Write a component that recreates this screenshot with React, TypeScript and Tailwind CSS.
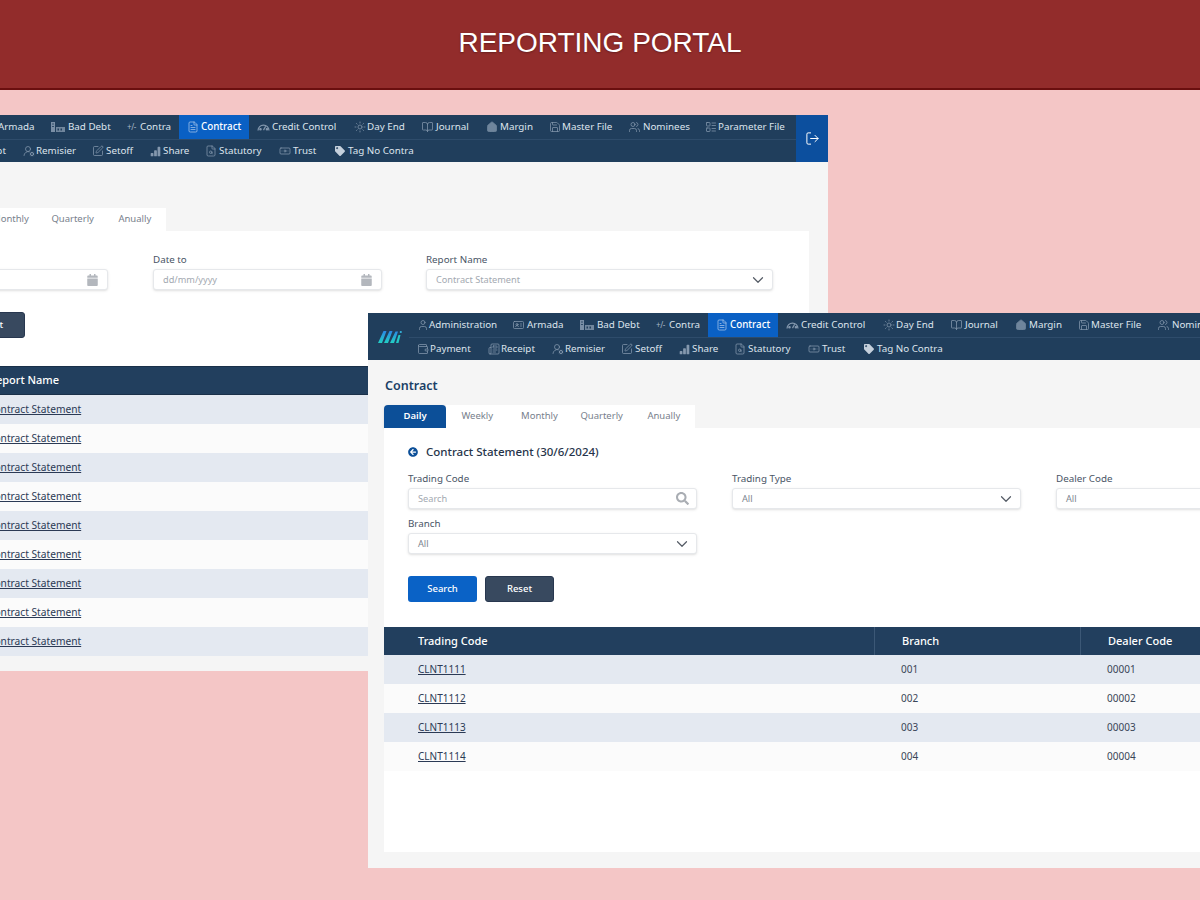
import { ReactNode } from "react";
import {
  BookOpen,
  ChevronDown,
  FileSearch,
  FileText,
  House,
  IdCard,
  LogOut,
  Newspaper,
  Save,
  SquarePen,
  Sun,
  User,
  UserRoundCog,
  Users,
  Banknote,
  Wallet,
  LayoutList,
} from "lucide-react";
import { BsBarChartFill } from "react-icons/bs";
import { FaArrowCircleLeft, FaCalendar, FaSearch, FaTag } from "react-icons/fa";

const ic = "w-3 h-3 text-[#8498ae]";
const font = { fontFamily: '"Noto Sans", sans-serif' };

function BadDebtIcon() {
  return (
    <svg viewBox="0 0 16 12" className="w-4 h-3 text-[#8498ae]" fill="currentColor">
      <path d="M1 1 h4 v10 h-4 Z" opacity="0.9" />
      <path d="M6 6 h9 v5 h-9 Z" opacity="0.8" />
      <path d="M7.5 7.5 h1.5 v2 h-1.5 Z M10.5 7.5 h1.5 v2 h-1.5 Z" fill="#203e5c" />
      <path d="M2.2 2.5 h1.6 v1 h-1.6 Z M2.2 5 h1.6 v1 h-1.6 Z" fill="#203e5c" />
    </svg>
  );
}

function GaugeIcon() {
  return (
    <svg viewBox="0 0 15 12" className="w-[13px] h-[11px] text-[#8498ae]" fill="none" stroke="currentColor" strokeWidth="1.4">
      <path d="M1.2 9.5 A6.3 6.3 0 0 1 13.8 9.5" />
      <path d="M7.5 9 L10 4.5" />
      <circle cx="4" cy="8" r="0.8" fill="currentColor" />
      <circle cx="11.5" cy="8" r="0.8" fill="currentColor" />
    </svg>
  );
}

type Item = { label: string; icon: ReactNode; w: string; slot: string; active?: boolean };

const row1: Item[] = [
  { label: "Administration", icon: <User className={ic} strokeWidth={1.5} />, w: "w-[95px]", slot: "w-[12px]" },
  { label: "Armada", icon: <IdCard className="w-[13px] h-3 text-[#8498ae]" strokeWidth={1.5} />, w: "w-[67px]", slot: "w-[15px]" },
  { label: "Bad Debt", icon: <BadDebtIcon />, w: "w-[77px]", slot: "w-[18px]" },
  { label: "Contra", icon: <span className="text-[8px] leading-none tracking-tighter text-[#a7b6c6]">+/-</span>, w: "w-[60px]", slot: "w-[13px]" },
  { label: "Contract", icon: <FileText className="w-3 h-3 text-[#a9c6ea]" strokeWidth={1.5} />, w: "w-[70px]", slot: "w-[14px]", active: true },
  { label: "Credit Control", icon: <GaugeIcon />, w: "w-[97px]", slot: "w-[15px]" },
  { label: "Day End", icon: <Sun className={ic} strokeWidth={1.5} />, w: "w-[67px]", slot: "w-[13px]" },
  { label: "Journal", icon: <BookOpen className="w-[13px] h-3 text-[#8498ae]" strokeWidth={1.5} />, w: "w-[65px]", slot: "w-[15px]" },
  { label: "Margin", icon: <House className="w-3 h-3 text-[#6f859c] fill-[#6f859c]" strokeWidth={1.5} />, w: "w-[63px]", slot: "w-[14px]" },
  { label: "Master File", icon: <Save className={ic} strokeWidth={1.5} />, w: "w-[79px]", slot: "w-[13px]" },
  { label: "Nominees", icon: <Users className="w-[13px] h-3 text-[#8498ae]" strokeWidth={1.5} />, w: "w-[77px]", slot: "w-[15px]" },
  { label: "Parameter File", icon: <LayoutList className={ic} strokeWidth={1.5} />, w: "w-[99px]", slot: "w-[13px]" },
];

const row2: Item[] = [
  { label: "Payment", icon: <Wallet className={ic} strokeWidth={1.5} />, w: "w-[71px]", slot: "w-[13px]" },
  { label: "Receipt", icon: <Newspaper className={ic} strokeWidth={1.5} />, w: "w-[64px]", slot: "w-[13px]" },
  { label: "Remisier", icon: <UserRoundCog className={ic} strokeWidth={1.5} />, w: "w-[69px]", slot: "w-[13px]" },
  { label: "Setoff", icon: <SquarePen className={ic} strokeWidth={1.5} />, w: "w-[58px]", slot: "w-[14px]" },
  { label: "Share", icon: <BsBarChartFill className="w-[11px] h-[11px] text-[#8498ae]" />, w: "w-[55px]", slot: "w-[13px]" },
  { label: "Statutory", icon: <FileSearch className={ic} strokeWidth={1.5} />, w: "w-[73px]", slot: "w-[14px]" },
  { label: "Trust", icon: <Banknote className="w-[14px] h-3 text-[#8498ae]" strokeWidth={1.5} />, w: "w-[57px]", slot: "w-[15px]" },
  { label: "Tag No Contra", icon: <FaTag className="w-[10px] h-[10px] text-[#c5d0dc]" />, w: "w-[90px]", slot: "w-[13px]" },
];

function NavItem({ item }: { item: Item }) {
  return (
    <div
      className={`${item.w} shrink-0 h-full flex items-center pl-2 whitespace-nowrap text-[9.8px] ${
        item.active ? "bg-[#0a60c4] text-white font-medium" : "text-[#dde4ec]"
      }`}
    >
      <span className={`${item.slot} shrink-0 flex items-center`}>{item.icon}</span>
      <span>{item.label}</span>
    </div>
  );
}

function NavBar() {
  return (
    <div className="h-[47px] shrink-0 flex bg-[#203e5c]">
      <div className="w-[41px] shrink-0 flex items-center justify-center">
        <svg width="24" height="13" viewBox="0 0 24 13" className="ml-[2px]">
          <defs>
            <linearGradient id="mi" x1="0" y1="1" x2="0" y2="0">
              <stop offset="0" stopColor="#22d0c4" />
              <stop offset="1" stopColor="#2a86e6" />
            </linearGradient>
          </defs>
          <path d="M0 13 L5.5 1 L8.5 1 L4 13 Z M6 13 L11.5 1 L14.5 1 L10 13 Z M12 13 L17.5 1.5 L20 1.5 L16 13 Z" fill="url(#mi)" />
          <path d="M18 13 L20.5 5 L22.5 5 L20.5 13 Z" fill="#22c8c8" />
          <circle cx="22.8" cy="2" r="1.1" fill="#35b8e0" />
        </svg>
      </div>
      <div className="flex-1 min-w-0 flex flex-col">
        <div className="h-[25px] flex border-b border-[#2e4c6b]">
          {row1.map((i) => (
            <NavItem key={i.label} item={i} />
          ))}
        </div>
        <div className="h-[22px] flex">
          {row2.map((i) => (
            <NavItem key={i.label} item={i} />
          ))}
        </div>
      </div>
      <div className="w-[32px] shrink-0 bg-[#0c4f9e] flex items-center justify-center">
        <LogOut className="w-[15px] h-[15px] text-white" strokeWidth={1.6} />
      </div>
    </div>
  );
}

function Tabs() {
  return (
    <div className="flex h-[23px]">
      {["Daily", "Weekly", "Monthly", "Quarterly", "Anually"].map((t, i) => (
        <div
          key={t}
          className={`w-[62.2px] flex items-center justify-center text-[9.5px] ${
            i === 0
              ? "bg-[#0c4f98] text-white font-semibold rounded-t-sm shadow"
              : "bg-white text-[#77808c]"
          }`}
        >
          {t}
        </div>
      ))}
    </div>
  );
}

function Field({ label, value, w, right, placeholder }: { label: string; value: string; w: string; right: ReactNode; placeholder?: boolean }) {
  return (
    <div className={`${w} shrink-0`}>
      <div className="h-[16px] flex items-center text-[9.8px] text-[#4a5566]">{label}</div>
      <div className="mt-[1px] h-[21px] pl-[9px] pr-[5px] flex items-center justify-between rounded-[3px] border border-[#e6e8eb] bg-white shadow-sm">
        <span className={`text-[9.2px] ${placeholder ? "text-[#a3a9b1]" : "text-[#7d8590]"}`}>{value}</span>
        {right}
      </div>
    </div>
  );
}

const chevron = <ChevronDown className="w-[18px] h-[18px] text-[#555c66]" strokeWidth={1.6} />;
const calendar = <FaCalendar className="w-[11px] h-[12px] mr-[4px] text-[#b3b7bd]" />;

function Buttons() {
  return (
    <div className="flex gap-2">
      <div className="w-[69px] h-[26px] rounded-[3px] bg-[#0a62c6] text-white text-[9.5px] font-medium flex items-center justify-center">
        Search
      </div>
      <div className="w-[69px] h-[26px] rounded-[3px] bg-[#38495f] border border-[#28374f] text-white text-[9.5px] font-medium flex items-center justify-center">
        Reset
      </div>
    </div>
  );
}

function BackWindow() {
  return (
    <div className="absolute left-[-161px] top-[115px] w-[989px] h-[556px] flex flex-col bg-[#f5f5f5]">
      <NavBar />
      <div className="flex-1 flex flex-col pl-4 pr-[19px] pb-[15px] pt-[46px]">
        <Tabs />
        <div className="flex-1 bg-white flex flex-col">
          <div className="pl-6 pt-[21px] flex gap-[45px]">
            <Field label="Date from" value="dd/mm/yyyy" w="w-[229px]" right={calendar} placeholder />
            <div className="mr-[-1px]">
              <Field label="Date to" value="dd/mm/yyyy" w="w-[229px]" right={calendar} placeholder />
            </div>
            <Field label="Report Name" value="Contract Statement" w="w-[347px]" right={chevron} placeholder />
          </div>
          <div className="pl-6 pt-[22px]">
            <Buttons />
          </div>
          <div className="mt-[28px] h-[29px] bg-[#223f5e] border border-[#1a3049] pl-[133px] flex items-center text-[11px] font-medium text-white">
            Report Name
          </div>
          {Array.from({ length: 9 }).map((_, i) => (
            <div
              key={i}
              className={`h-[29px] pl-[133px] flex items-center text-[10.2px] text-[#2b3a55] underline ${
                i % 2 === 0 ? "bg-[#e4e9f1]" : "bg-[#fbfbfb]"
              }`}
            >
              Contract Statement
            </div>
          ))}
        </div>
      </div>
    </div>
  );
}

const clients = [
  { code: "CLNT1111", branch: "001", dealer: "00001" },
  { code: "CLNT1112", branch: "002", dealer: "00002" },
  { code: "CLNT1113", branch: "003", dealer: "00003" },
  { code: "CLNT1114", branch: "004", dealer: "00004" },
];

function FrontWindow() {
  return (
    <div className="absolute left-[368px] top-[313px] w-[989px] h-[555px] flex flex-col bg-[#f5f5f5]">
      <NavBar />
      <div className="flex-1 flex flex-col pl-4 pr-[19px] pb-4">
        <div className="h-[45px] pt-[18px] pl-[1px] text-[12.5px] font-semibold leading-4 text-[#1b3f66]">Contract</div>
        <Tabs />
        <div className="flex-1 bg-white flex flex-col">
          <div className="pl-6 pt-[7px] h-[41px] flex items-center gap-[7px] text-[11.5px] font-medium text-[#26344a]">
            <FaArrowCircleLeft className="w-[10px] h-[10px] text-[#0c4f98]" />
            <span className="ml-[1px]">Contract Statement (30/6/2024)</span>
          </div>
          <div className="pl-6 pt-[2px] flex gap-[35px]">
            <Field label="Trading Code" value="Search" w="w-[289px]" placeholder right={<FaSearch className="w-[13px] h-[13px] mr-[2px] text-[#a9adb3]" />} />
            <Field label="Trading Type" value="All" w="w-[289px]" right={chevron} />
            <Field label="Dealer Code" value="All" w="w-[289px]" right={chevron} />
          </div>
          <div className="pl-6 pt-[7px]">
            <Field label="Branch" value="All" w="w-[289px]" right={chevron} />
          </div>
          <div className="pl-6 pt-[22px]">
            <Buttons />
          </div>
          <div className="mt-[25px] h-[28px] grid grid-cols-[490px_206px_1fr] bg-[#223f5e] text-[11px] font-medium text-white">
            <div className="pl-[34px] flex items-center">Trading Code</div>
            <div className="pl-[27px] flex items-center border-l border-[#3c5876]">Branch</div>
            <div className="pl-[27px] flex items-center border-l border-[#3c5876]">Dealer Code</div>
          </div>
          {clients.map((c, i) => (
            <div
              key={c.code}
              className={`h-[29px] grid grid-cols-[490px_206px_1fr] items-center text-[10px] text-[#3a4658] ${
                i % 2 === 0 ? "bg-[#e4e9f1]" : "bg-[#fbfbfb]"
              }`}
            >
              <div className="pl-[34px] text-[#2b3a55] underline">{c.code}</div>
              <div className="pl-[27px]">{c.branch}</div>
              <div className="pl-[27px]">{c.dealer}</div>
            </div>
          ))}
        </div>
      </div>
    </div>
  );
}

export default function App() {
  return (
    <div className="relative w-[1200px] h-[900px] overflow-hidden bg-[#f4c6c6]" style={font}>
      <div className="h-[90px] flex items-center justify-center pb-[2px] bg-[#922c2b] border-b-2 border-[#6a0f0f]">
        <h1 className="text-[28px] text-white [font-family:'Liberation_Sans',sans-serif] [text-shadow:0_1px_2px_rgba(0,0,0,0.3)]">
          REPORTING PORTAL
        </h1>
      </div>
      <BackWindow />
      <FrontWindow />
    </div>
  );
}
